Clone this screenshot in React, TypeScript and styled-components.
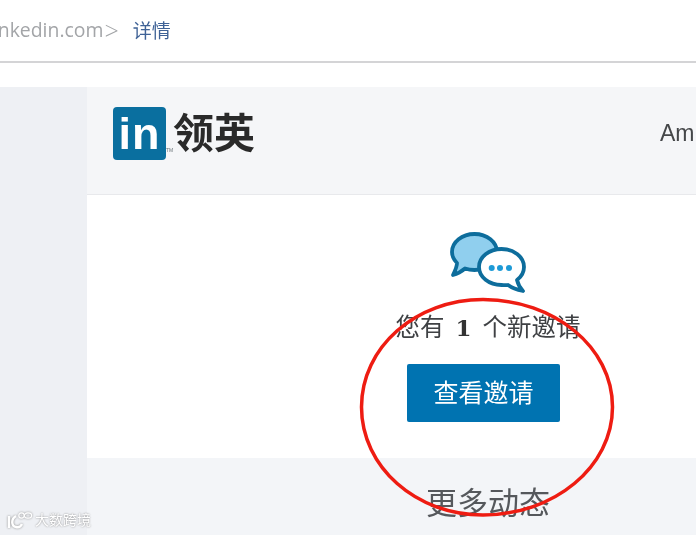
import styled, { createGlobalStyle } from 'styled-components';

const cjk = '"Liberation Sans", "Noto Sans CJK SC", sans-serif';

const GlobalStyle = createGlobalStyle`
	html, body {
		margin: 0;
		padding: 0;
		width: 696px;
		height: 535px;
		overflow: hidden;
		background: #fff;
		font-family: ${cjk};
	}
`;

const Page = styled.div`
	position: relative;
	width: 696px;
	height: 535px;
	overflow: hidden;
	filter: blur(0.35px);
`;

const TopBar = styled.div`
	height: 63px;
	box-sizing: border-box;
	display: flex;
	align-items: center;
	gap: 14px;
	padding-bottom: 2px;
	border-bottom: 2px solid #d4d4d6;
	overflow: hidden;
`;

const Domain = styled.span`
	margin-left: -12px;
	font-family: "Open Sans", sans-serif;
	font-size: 19.4px;
	color: #a3a5a8;
	white-space: nowrap;
`;

const Chevron = styled.span`
	margin-left: 1px;
	font-family: "Open Sans", sans-serif;
	font-size: 25px;
	font-weight: 300;
	line-height: 20px;
	vertical-align: -3px;
`;

const Crumb = styled.span`
	font-size: 19px;
	color: #3f6296;
`;

const Spacer = styled.div`
	height: 24px;
`;

const Content = styled.div`
	display: flex;
	width: 889px;
	height: 448px;
`;

const Sidebar = styled.div`
	width: 87px;
	flex-shrink: 0;
	background: #eef0f4;
`;

const Main = styled.div`
	flex: 1;
	display: flex;
	flex-direction: column;
`;

const Header = styled.div`
	height: 108px;
	box-sizing: border-box;
	display: flex;
	align-items: center;
	padding: 0 0 14px 26px;
	background: #f5f6f8;
	border-bottom: 1px solid #e8e9ec;
`;

const LogoBox = styled.div`
	width: 53px;
	height: 53px;
	border-radius: 4px;
	background: #0a6f9f;
	color: #fff;
	font-size: 45px;
	font-weight: 700;
	line-height: 54px;
	letter-spacing: 1px;
	text-align: center;
	overflow: hidden;
`;

const LogoMark = styled.span`
	width: 7px;
	align-self: flex-end;
	margin-bottom: 27px;
	font-size: 5px;
	line-height: 6px;
	color: #6b7479;
`;

const LogoName = styled.div`
	font-size: 41px;
	font-weight: 700;
	line-height: 50px;
	color: #2a2a2a;
	white-space: nowrap;
`;

const UserName = styled.div`
	margin-left: 405px;
	font-size: 23px;
	color: #454749;
`;

const Body = styled.div`
	height: 263px;
	display: flex;
	flex-direction: column;
	align-items: center;
	background: #fff;
`;

const BubbleIcon = styled.svg`
	display: block;
	margin-top: 35px;
	width: 80px;
	height: 66px;
`;

const Message = styled.div`
	margin-top: 14px;
	font-size: 24.5px;
	line-height: 35px;
	color: #3f4144;
	white-space: nowrap;
`;

const Count = styled.strong`
	margin: 0 11px;
	font-family: "DejaVu Serif", serif;
	font-weight: 700;
	font-size: 23px;
	color: #333;
`;

const InviteButton = styled.button`
	margin: 19px 9px 0 0;
	width: 153px;
	height: 58px;
	padding: 0 0 4px;
	border: 0;
	border-radius: 2px;
	background: #0073b1;
	color: #fff;
	font-family: ${cjk};
	font-size: 25px;
`;

const Footer = styled.div`
	flex: 1;
	background: #f3f5f8;
	text-align: center;
`;

const FooterTitle = styled.div`
	margin-top: 24px;
	font-size: 31px;
	line-height: 44px;
	color: #55585c;
`;

const Circle = styled.svg`
	position: absolute;
	left: 350px;
	top: 290px;
	width: 280px;
	height: 240px;
	pointer-events: none;
`;

const Watermark = styled.div`
	position: absolute;
	left: 7px;
	bottom: 6px;
	display: flex;
	align-items: center;
	gap: 2px;
	font-size: 14px;
	line-height: 18px;
	color: #fff;
	text-shadow: 0 0 2px #808080;
`;

const WatermarkLogo = styled.svg`
	width: 26px;
	height: 18px;
	filter: drop-shadow(0 0 1px #8c8c8c);
`;

const App = () => {
	return (
		<Page>
			<GlobalStyle />
			<TopBar>
				<Domain>
					linkedin.com<Chevron>&gt;</Chevron>
				</Domain>
				<Crumb>详情</Crumb>
			</TopBar>
			<Spacer />
			<Content>
				<Sidebar />
				<Main>
					<Header>
						<LogoBox>in</LogoBox>
						<LogoMark>TM</LogoMark>
						<LogoName>领英</LogoName>
						<UserName>Am</UserName>
					</Header>
					<Body>
						<BubbleIcon viewBox="0 0 80 66">
							<path
								d="M26.5 4C39 4 49 12 49 22C49 32 39 40 26.5 40C23 40 20 39.5 17 38.5C13 42 9 44 5 45C7 41 9 37 9 33C6 30 4 26 4 22C4 12 14 4 26.5 4z"
								fill="#90cfee"
								stroke="#0d6d9c"
								strokeWidth="3.8"
								strokeLinejoin="round"
							/>
							<path
								d="M53.5 19C66 19 76 27 76 37C76 42 73 47 69 50C70 54 72 58 75 61C70 60 64 58 60 55C58 55.5 55.5 55 53.5 55C41 55 31 47 31 37C31 27 41 19 53.5 19z"
								fill="#fff"
								stroke="#0d6d9c"
								strokeWidth="3.8"
								strokeLinejoin="round"
							/>
							<circle cx="43.7" cy="38" r="3" fill="#1d9ad6" />
							<circle cx="52" cy="38" r="3" fill="#1d9ad6" />
							<circle cx="61" cy="38" r="3" fill="#1d9ad6" />
						</BubbleIcon>
						<Message>
							您有
							<Count>1</Count>
							个新邀请
						</Message>
						<InviteButton>查看邀请</InviteButton>
					</Body>
					<Footer>
						<FooterTitle>更多动态</FooterTitle>
					</Footer>
				</Main>
			</Content>
			<Circle viewBox="0 0 280 240">
				<path
					d="M133 9.5C204 9.5 262.5 57 262.5 117C262.5 177 204 225 133 225C66 225 11.5 177 11.5 117C11.5 57 66 9.5 133 9.5z"
					fill="none"
					stroke="#ee1c12"
					strokeWidth="3.5"
				/>
			</Circle>
			<Watermark>
				<WatermarkLogo viewBox="0 0 26 18">
					<path
						d="M2 5V17M9 5C4 8 4 15 9 16C12 17 14 15 15 13"
						fill="none"
						stroke="#fff"
						strokeWidth="2.4"
					/>
					<circle cx="14.5" cy="4.5" r="2.7" fill="none" stroke="#fff" strokeWidth="1.2" />
					<ellipse cx="21" cy="4.5" rx="3.6" ry="2.6" fill="none" stroke="#fff" strokeWidth="1.2" />
				</WatermarkLogo>
				大数跨境
			</Watermark>
		</Page>
	);
};

export default App;
